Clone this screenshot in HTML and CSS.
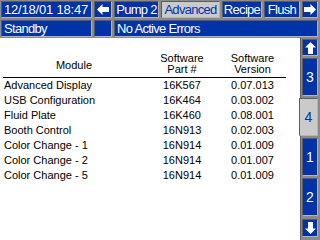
FILE: index.html
```html
<!DOCTYPE html>
<html lang="en">
<head>
    <meta charset="UTF-8">
    <title>Advanced - Software Versions</title>
    <link rel="stylesheet" href="styles.css">
</head>
<body>
    <div class="screen">
        <div class="header">
            <div class="box date">12/18/01 18:47</div>
            <div class="box arrow">
                <svg width="12" height="11" viewBox="0 0 12 11"><path d="M0 5.5 L5.5 0 L5.5 3 L12 3 L12 8 L5.5 8 L5.5 11 Z" fill="#fff"/></svg>
            </div>
            <div class="tabs">
                <div class="box tab pump">Pump 2</div>
                <div class="box tab active adv">Advanced</div>
                <div class="box tab recipe">Recipe</div>
                <div class="box tab flush">Flush</div>
                <div class="box arrow small">
                    <svg width="12" height="11" viewBox="0 0 12 11"><path d="M12 5.5 L6.5 0 L6.5 3 L0 3 L0 8 L6.5 8 L6.5 11 Z" fill="#fff"/></svg>
                </div>
            </div>

            <div class="box status">Standby</div>
            <div class="box arrow"></div>
            <div class="box errors">No Active Errors</div>
        </div>

        <div class="body">
            <div class="content">
                <table class="versions">
                    <thead>
                        <tr>
                            <th class="col-module"><span class="mod">Module</span></th>
                            <th class="col-part">Software<br>Part #</th>
                            <th class="col-ver">Software<br>Version</th>
                        </tr>
                    </thead>
                    <tbody>
                        <tr><td>Advanced Display</td><td>16K567</td><td>0.07.013</td></tr>
                        <tr><td>USB Configuration</td><td>16K464</td><td>0.03.002</td></tr>
                        <tr><td>Fluid Plate</td><td>16K460</td><td>0.08.001</td></tr>
                        <tr><td>Booth Control</td><td>16N913</td><td>0.02.003</td></tr>
                        <tr><td>Color Change - 1</td><td>16N914</td><td>0.01.009</td></tr>
                        <tr><td>Color Change - 2</td><td>16N914</td><td>0.01.007</td></tr>
                        <tr><td>Color Change - 5</td><td>16N914</td><td>0.01.009</td></tr>
                    </tbody>
                </table>
            </div>

            <div class="side">
                <div class="box sbtn arr">
                    <svg width="11" height="12" viewBox="0 0 11 12"><path d="M5.5 0 L11 5.5 L8 5.5 L8 12 L3 12 L3 5.5 L0 5.5 Z" fill="#fff"/></svg>
                </div>
                <div class="box sbtn page">3</div>
                <div class="box sbtn page active">4</div>
                <div class="box sbtn page">1</div>
                <div class="box sbtn page">2</div>
                <div class="box sbtn arr down">
                    <svg width="11" height="12" viewBox="0 0 11 12"><path d="M5.5 12 L11 6.5 L8 6.5 L8 0 L3 0 L3 6.5 L0 6.5 Z" fill="#fff"/></svg>
                </div>
            </div>
        </div>
    </div>
</body>
</html>
```

FILE: styles.css
```css
body {
    margin: 0;
    padding: 0;
    background: #8a8a8a;
    font-family: 'Liberation Sans', Arial, sans-serif;
}

.screen {
    width: 320px;
    height: 240px;
    overflow: hidden;
    display: flex;
    flex-direction: column;
}

/* top bar */
.header {
    display: grid;
    grid-template-columns: 91px 18px 204px;
    grid-template-rows: 17px 17px;
    column-gap: 2px;
    row-gap: 2px;
    padding: 1px 0 1px 1px;
    height: 37px;
    box-sizing: border-box;
}

.box {
    background: #0032a8;
    color: #fff;
    box-sizing: border-box;
    border-top: 1px solid #5c5c5c;
    border-left: 1px solid #5c5c5c;
    border-bottom: 1px solid #b4b4b4;
    border-right: 1px solid #b4b4b4;
    display: flex;
    align-items: center;
    font-size: 13px;
    letter-spacing: -0.7px;
    white-space: nowrap;
}

.date {
    letter-spacing: -0.2px;
    padding-left: 2px;
}

.status, .errors {
    padding-left: 2px;
}

.arrow {
    justify-content: center;
}

.tabs {
    display: flex;
    gap: 2px;
}

.tab {
    justify-content: center;
}

.pump { width: 45px; }
.adv { width: 59px; }
.recipe { width: 40px; }
.flush { width: 36px; }
.arrow.small { width: 16px; }

.tab.active {
    background: #cacaca;
    color: #0032a8;
}

/* main area */
.body {
    flex: 1;
    display: flex;
    margin-top: 1px;
}

.content {
    width: 300px;
    background: #fff;
}

.versions {
    border-collapse: collapse;
    margin: 15px 0 0 3px;
    width: 283px;
    font-size: 11px;
    color: #000;
}

.versions th {
    font-weight: normal;
    line-height: 11px;
    padding: 0 0 2px 0;
    border-bottom: 1px solid #000;
    text-align: center;
    vertical-align: middle;
}

.versions th .mod {
    position: relative;
    top: 1px;
}

.col-module { width: 142px; }
.col-part { width: 74px; }
.col-ver { width: 67px; }

.versions td {
    line-height: 15px;
    padding: 0;
    text-align: center;
}

.versions td:first-child {
    text-align: left;
    padding-left: 1px;
}

/* page buttons */
.side {
    width: 20px;
    border-left: 1px solid #606060;
    box-sizing: border-box;
    display: flex;
    flex-direction: column;
    align-items: flex-end;
    gap: 2px;
    padding: 1px 2px 0 0;
}

.sbtn {
    width: 16px;
    justify-content: center;
    font-size: 14px;
    letter-spacing: 0;
}

.sbtn.arr {
    height: 17px;
}

.sbtn.down {
    margin-top: 1px;
    height: 18px;
}

.sbtn.page {
    height: 38px;
}

.sbtn.active {
    background: #cacaca;
    color: #0032a8;
    width: 19px;
}
```
